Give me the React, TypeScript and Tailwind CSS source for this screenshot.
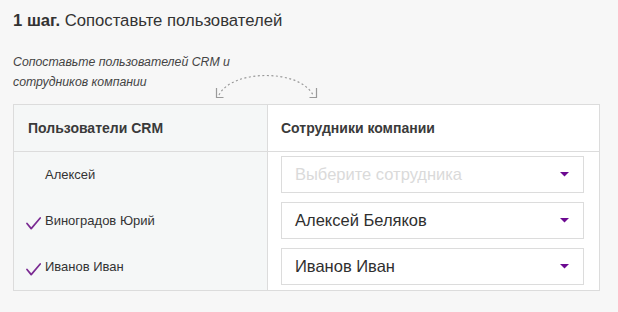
import React from "react";

const font = { fontFamily: '"Liberation Sans", Arial, sans-serif' };

function Check({ show }: { show: boolean }) {
  return (
    <svg width="15" height="13" viewBox="0 0 15 13" className={show ? "mt-[6px] shrink-0" : "mt-[6px] shrink-0 invisible"}>
      <path d="M1 6.5 L5.2 11.6 L14.2 1" fill="none" stroke="#7a2a92" strokeWidth="1.7" strokeLinecap="round" strokeLinejoin="round" />
    </svg>
  );
}

function Arrow() {
  return (
    <svg width="9" height="5" viewBox="0 0 9 5" className="shrink-0">
      <path d="M0 0 H9 L4.5 4.5 Z" fill="#6c0a91" />
    </svg>
  );
}

function Select({ value }: { value?: string }) {
  return (
    <div className="h-[37px] w-[303px] bg-white border border-[#dcdcdc] flex items-center justify-between pl-[13px] pr-[14px]">
      <span className={value ? "text-[16.5px] text-[#2f2f2f]" : "text-[16.5px] text-[#dadada]"}>
        {value ?? "Выберите сотрудника"}
      </span>
      <Arrow />
    </div>
  );
}

export default function App() {
  const users = [
    { name: "Алексей", checked: false, sel: undefined as string | undefined },
    { name: "Виноградов Юрий", checked: true, sel: "Алексей Беляков" },
    { name: "Иванов Иван", checked: true, sel: "Иванов Иван" },
  ];
  return (
    <div style={font} className="w-[618px] h-[312px] bg-[#f7f7f7] pl-[13px] pt-[11px] text-[#333]">
      <div className="text-[16.7px] leading-[20px] text-[#333]">
        <span className="font-bold">1 шаг.</span> Сопоставьте пользователей
      </div>
      <div className="flex items-start mt-[21px] h-[52px]">
        <div className="w-[201px] shrink-0 whitespace-nowrap italic text-[12.3px] leading-[20px] text-[#444]">
          Сопоставьте пользователей CRM и
          <br />
          сотрудников компании
        </div>
        <svg width="106" height="26" viewBox="0 0 106 26" className="mt-[22px] shrink-0 self-start">
          <path d="M5 21 C 18 -5, 86 -5, 99 21" fill="none" stroke="#9a9a9a" strokeWidth="1.2" strokeDasharray="2 2.5" />
          <path d="M2.5 14 V23.5 H9.5" fill="none" stroke="#9a9a9a" strokeWidth="1.2" />
          <path d="M102.5 14 V23.5 H95.5" fill="none" stroke="#9a9a9a" strokeWidth="1.2" />
        </svg>
      </div>
      <div className="w-[587px] border border-[#dcdcdc] grid grid-cols-[254px_1fr]">
        <div className="bg-[#f5f7f7] border-r border-[#dcdcdc]">
          <div className="h-[47px] border-b border-[#dcdcdc] flex items-center pl-[14px] text-[14px] font-bold text-[#3a3a3a]">
            Пользователи CRM
          </div>
          <div className="pt-[4px] pb-[5px] flex flex-col gap-[9px]">
            {users.map((u) => (
              <div key={u.name} className="h-[37px] flex items-center pl-[12px] gap-[4px] text-[13px] text-[#333]">
                <Check show={u.checked} />
                <span>{u.name}</span>
              </div>
            ))}
          </div>
        </div>
        <div className="bg-white">
          <div className="h-[47px] border-b border-[#dcdcdc] flex items-center pl-[13px] text-[14px] font-bold text-[#3a3a3a]">
            Сотрудники компании
          </div>
          <div className="pt-[4px] pb-[5px] pl-[13px] flex flex-col gap-[9px]">
            {users.map((u) => (
              <Select key={u.name} value={u.sel} />
            ))}
          </div>
        </div>
      </div>
    </div>
  );
}
